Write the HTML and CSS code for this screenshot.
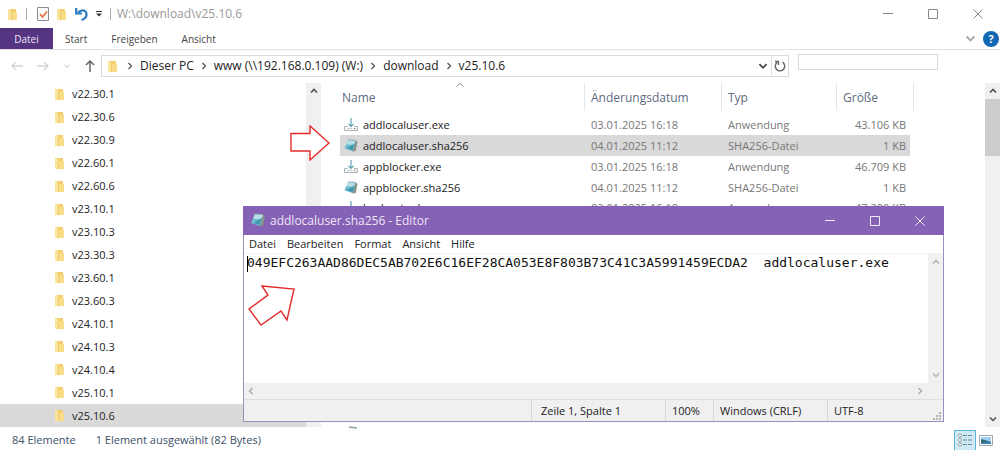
FILE: index.html
```
<!DOCTYPE html>
<html lang="de">
<head>
<meta charset="utf-8">
<title>W:\download\v25.10.6</title>
<link rel="stylesheet" href="styles.css">
</head>
<body>
<svg class="defs" aria-hidden="true">
  <symbol id="folder" viewBox="0 0 10 13"><path d="M1 1h7v10H1z" fill="#f3cf6f"/><path d="M0 1l4 1v10.500L0 12z" fill="#fbe49c"/><path d="M4 4h5v8H4z" fill="#f9dd86"/><path d="M3.500 2v10" stroke="#e9bd55" stroke-width=".7"/></symbol>
  <symbol id="note" viewBox="0 0 16 15"><path d="M12 1l3 2-2 10-4 0z" fill="#8b8f86"/><path d="M5 1l8 .500-3 11.500-9-3z" fill="#6dbccd"/><path d="M5 1l8 .500-2 5-8-1z" fill="#b4e0e6"/><path d="M8 7l3.500-2-1.800 7-6-2z" fill="#3f98af"/><path d="M5 1l8 .500" stroke="#8fa9ae"/></symbol>
  <symbol id="exe" viewBox="0 0 16 14"><path d="M1.500 8.500h3M11 8.500h3.500v4h-13v-4" fill="#f8f8f8" stroke="#adb3b8"/><path d="M4 10.500h5" stroke="#c9cdd0"/><path d="M11 10.500h1.500" stroke="#888"/><path d="M8 0v8.500M5.500 6L8 8.500 10.500 6" fill="none" stroke="#63a5b8" stroke-width="1.200"/></symbol>
  <symbol id="up" viewBox="0 0 10 10"><path d="M2 6.500l3-3 3 3" fill="none" stroke="currentColor" stroke-width="1.600"/></symbol>
  <symbol id="sort" viewBox="0 0 10 10"><path d="M1.500 6.500l3.500-3 3.500 3" fill="none" stroke="currentColor" stroke-width=".9"/></symbol>
  <symbol id="down" viewBox="0 0 10 10"><path d="M2 3.500l3 3 3-3" fill="none" stroke="currentColor" stroke-width="1.500"/></symbol>
  <symbol id="left" viewBox="0 0 10 10"><path d="M6.500 2l-3 3 3 3" fill="none" stroke="currentColor" stroke-width="1.500"/></symbol>
  <symbol id="right" viewBox="0 0 10 10"><path d="M3.500 2l3 3-3 3" fill="none" stroke="currentColor" stroke-width="1.300"/></symbol>
  <symbol id="min" viewBox="0 0 10 10"><path d="M0 4.500h10" stroke="currentColor"/></symbol>
  <symbol id="max" viewBox="0 0 10 10"><path d="M.5.5h9v9h-9z" fill="none" stroke="currentColor"/></symbol>
  <symbol id="close" viewBox="0 0 10 10"><path d="M.5.5l9 9M9.500.5l-9 9" stroke="currentColor"/></symbol>
</svg>
<div class="explorer">
  <header class="titlebar">
    <div class="quick">
      <svg class="folder"><use href="#folder"/></svg>
      <span class="bar"></span>
      <button class="plain" aria-label="Eigenschaften"><svg width="12" height="14" viewBox="0 0 12 14"><path d="M.5.5h11v13H.5z" fill="#fafafa" stroke="#8c8c8c"/><path d="M3 7l2.500 3L10 4.500" fill="none" stroke="#e2703a" stroke-width="1.700"/></svg></button>
      <button class="plain" aria-label="Neuer Ordner"><svg class="folder"><use href="#folder"/></svg></button>
      <button class="plain" aria-label="Rückgängig"><svg width="13" height="14" viewBox="0 0 13 14"><path d="M3 5.500C7 1.500 11.500 3.500 11.500 7.500c0 2.500-2 4.500-5 5.500" fill="none" stroke="#2b7cc0" stroke-width="2.200"/><path d="M1.200 1v5.500H7" fill="none" stroke="#2b7cc0" stroke-width="2.200"/></svg></button>
      <button class="plain" aria-label="Symbolleiste anpassen"><svg width="6" height="6" viewBox="0 0 6 6"><path d="M0 .5h6" stroke="#333"/><path d="M0 2.500h6L3 5.500z" fill="#333"/></svg></button>
      <span class="bar"></span>
      <h1>W:\download\v25.10.6</h1>
    </div>
    <div class="controls">
      <button class="plain" aria-label="Minimieren"><svg><use href="#min"/></svg></button>
      <button class="plain" aria-label="Maximieren"><svg><use href="#max"/></svg></button>
      <button class="plain" aria-label="Schließen"><svg><use href="#close"/></svg></button>
    </div>
  </header>
  <nav class="ribbon">
    <button class="plain tab file">Datei</button>
    <button class="plain tab">Start</button>
    <button class="plain tab">Freigeben</button>
    <button class="plain tab">Ansicht</button>
    <div class="help">
      <button class="plain" aria-label="Menüband erweitern"><svg width="13" height="13"><use href="#down"/></svg></button>
      <button class="plain question" aria-label="Hilfe">?</button>
    </div>
  </nav>
  <div class="navigation">
    <div class="arrows">
      <button class="plain" aria-label="Zurück"><svg width="12" height="12" viewBox="0 0 12 12"><path d="M12 6H1M5 2L1 6l4 4" fill="none" stroke="#d3d3d3" stroke-width="1.300"/></svg></button>
      <button class="plain" aria-label="Vorwärts"><svg width="12" height="12" viewBox="0 0 12 12"><path d="M0 6h11M7 2l4 4-4 4" fill="none" stroke="#d3d3d3" stroke-width="1.300"/></svg></button>
      <button class="plain pale" aria-label="Verlauf"><svg width="8" height="8"><use href="#down"/></svg></button>
      <button class="plain" aria-label="Nach oben"><svg width="10" height="12" viewBox="0 0 10 12"><path d="M5 12V1M1 5l4-4 4 4" fill="none" stroke="#666" stroke-width="1.500"/></svg></button>
    </div>
    <div class="address">
      <svg class="folder"><use href="#folder"/></svg>
      <svg class="sep"><use href="#right"/></svg>
      <a href="#pc">Dieser PC</a>
      <svg class="sep"><use href="#right"/></svg>
      <a href="#www">www (\\192.168.0.109) (W:)</a>
      <svg class="sep"><use href="#right"/></svg>
      <a href="#download">download</a>
      <svg class="sep"><use href="#right"/></svg>
      <a href="#version">v25.10.6</a>
      <button class="plain history" aria-label="Vorherige Orte"><svg width="12" height="12"><use href="#down"/></svg></button>
      <button class="plain refresh" aria-label="Aktualisieren"><svg width="12" height="12" viewBox="0 0 12 12"><path d="M8.500 2.200A4.700 4.700 0 1 1 3.500 2.200" fill="none" stroke="#666" stroke-width="1.400"/><path d="M1 1.500h3.500V5" fill="none" stroke="#666" stroke-width="1.300"/></svg></button>
    </div>
    <input class="search" type="search" aria-label="Suchen">
  </div>
  <main class="panes">
    <ul class="tree">
      <li><svg class="folder"><use href="#folder"/></svg>v22.30.1</li>
      <li><svg class="folder"><use href="#folder"/></svg>v22.30.6</li>
      <li><svg class="folder"><use href="#folder"/></svg>v22.30.9</li>
      <li><svg class="folder"><use href="#folder"/></svg>v22.60.1</li>
      <li><svg class="folder"><use href="#folder"/></svg>v22.60.6</li>
      <li><svg class="folder"><use href="#folder"/></svg>v23.10.1</li>
      <li><svg class="folder"><use href="#folder"/></svg>v23.10.3</li>
      <li><svg class="folder"><use href="#folder"/></svg>v23.30.3</li>
      <li><svg class="folder"><use href="#folder"/></svg>v23.60.1</li>
      <li><svg class="folder"><use href="#folder"/></svg>v23.60.3</li>
      <li><svg class="folder"><use href="#folder"/></svg>v24.10.1</li>
      <li><svg class="folder"><use href="#folder"/></svg>v24.10.3</li>
      <li><svg class="folder"><use href="#folder"/></svg>v24.10.4</li>
      <li><svg class="folder"><use href="#folder"/></svg>v25.10.1</li>
      <li class="selected"><svg class="folder"><use href="#folder"/></svg>v25.10.6</li>
    </ul>
    <div class="scroll">
      <svg><use href="#up"/></svg>
      <svg><use href="#down"/></svg>
    </div>
    <div class="files">
      <table>
        <colgroup><col class="name"><col class="date"><col class="type"><col class="size"></colgroup>
        <thead><tr><th>Name<svg class="sort"><use href="#sort"/></svg></th><th>Änderungsdatum</th><th>Typ</th><th>Größe</th></tr></thead>
        <tbody>
          <tr><td><div class="file-name"><svg><use href="#exe"/></svg>addlocaluser.exe</div></td><td>03.01.2025 16:18</td><td>Anwendung</td><td>43.106 KB</td></tr>
          <tr class="selected"><td><div class="file-name"><svg><use href="#note"/></svg>addlocaluser.sha256</div></td><td>04.01.2025 11:12</td><td>SHA256-Datei</td><td>1 KB</td></tr>
          <tr><td><div class="file-name"><svg><use href="#exe"/></svg>appblocker.exe</div></td><td>03.01.2025 16:18</td><td>Anwendung</td><td>46.709 KB</td></tr>
          <tr><td><div class="file-name"><svg><use href="#note"/></svg>appblocker.sha256</div></td><td>04.01.2025 11:12</td><td>SHA256-Datei</td><td>1 KB</td></tr>
          <tr class="partial"><td><div class="file-name"><svg><use href="#exe"/></svg>backuptool.exe</div></td><td>03.01.2025 16:18</td><td>Anwendung</td><td>47.200 KB</td></tr>
        </tbody>
      </table>
      <svg class="cut-icon" viewBox="0 0 10 3"><path d="M1 1l8 1" stroke="#8aa3a5" stroke-width="1.500"/></svg>
    </div>
    <div class="scroll">
      <svg><use href="#up"/></svg>
      <span class="thumb"></span>
      <svg><use href="#down"/></svg>
    </div>
  </main>
  <footer class="status">
    <span>84 Elemente</span>
    <span>1 Element ausgewählt (82 Bytes)</span>
    <div class="views">
      <button class="plain view active" aria-label="Details"><svg width="16" height="14" viewBox="0 0 16 14"><g fill="#fff" stroke="#888" stroke-width=".8"><circle cx="3" cy="2.500" r="1.600"/><circle cx="3" cy="7" r="1.600"/><circle cx="3" cy="11.500" r="1.600"/></g><path d="M6 2.500h4M11 2.500h4M6 7h4M11 7h4M6 11.500h4M11 11.500h4" stroke="#6f8792"/></svg></button>
      <button class="plain view" aria-label="Miniaturansichten"><svg width="14" height="11" viewBox="0 0 14 11"><path d="M.5.5h13v10H.5z" fill="#fff" stroke="#9aa"/><path d="M2 2h10v7H2z" fill="#9fd0f2"/><path d="M2 4l4 1 6 2v2H2z" fill="#316a70"/><path d="M2 7.500l10-.5v2H2z" fill="#3c83bd"/></svg></button>
    </div>
  </footer>
</div>

<section class="editor" aria-label="Editor">
  <header class="editor-title">
    <svg class="note"><use href="#note"/></svg>
    <h2>addlocaluser.sha256 - Editor</h2>
    <div class="controls">
      <button class="plain" aria-label="Minimieren"><svg><use href="#min"/></svg></button>
      <button class="plain" aria-label="Maximieren"><svg><use href="#max"/></svg></button>
      <button class="plain" aria-label="Schließen"><svg><use href="#close"/></svg></button>
    </div>
  </header>
  <nav class="menu">
    <button class="plain">Datei</button>
    <button class="plain">Bearbeiten</button>
    <button class="plain">Format</button>
    <button class="plain">Ansicht</button>
    <button class="plain">Hilfe</button>
  </nav>
  <div class="document">
    <textarea aria-label="Textinhalt" spellcheck="false" wrap="off">049EFC263AAD86DEC5AB702E6C16EF28CA053E8F803B73C41C3A5991459ECDA2  addlocaluser.exe</textarea>
    <span class="caret"></span>
    <div class="scroll light">
      <svg><use href="#up"/></svg>
      <svg><use href="#down"/></svg>
    </div>
  </div>
  <div class="hscroll">
    <svg><use href="#left"/></svg>
    <svg><use href="#right"/></svg>
  </div>
  <footer class="editor-status">
    <span class="position">Zeile 1, Spalte 1</span>
    <span class="zoom">100%</span>
    <span class="ending">Windows (CRLF)</span>
    <span class="encoding">UTF-8</span>
    <svg class="grip" viewBox="0 0 8 8"><path d="M6 0h2v2H6zM3 3h2v2H3zM6 3h2v2H6zM0 6h2v2H0zM3 6h2v2H3zM6 6h2v2H6z" fill="#b5b5b5"/></svg>
  </footer>
</section>

<svg class="pointer first" viewBox="0 0 40 36"><path d="M1 8.500h19V1l19 17-19 17v-9H1z" fill="#fff" stroke="#e32b2b" stroke-width="1.400"/></svg>
<svg class="pointer second" viewBox="0 0 50 44"><path d="M15 2l32 3-7 31-6-9-20 14L2 25l19-14z" fill="#fff" stroke="#e32b2b" stroke-width="1.400"/></svg>
</body>
</html>
```
FILE: styles.css
```
* { box-sizing: border-box; }
body {
  margin: 0;
  position: relative;
  background: #fff;
  color: #222;
  font: 12px/16px "Open Sans", "Noto Sans", sans-serif;
}
svg { display: block; flex: none; }
h1, h2 { margin: 0; font-weight: 400; }
a { color: inherit; text-decoration: none; }
.defs { position: absolute; width: 0; height: 0; }
.plain {
  display: flex;
  align-items: center;
  justify-content: center;
  padding: 0;
  border: 0;
  background: none;
  color: inherit;
  font: inherit;
}
.folder { width: 10px; height: 13px; }

.explorer { display: flex; flex-direction: column; min-height: 100vh; }
.titlebar { display: flex; justify-content: space-between; height: 28px; }
.quick { display: flex; align-items: center; gap: 8px; padding-left: 8px; }
.quick h1 { margin-left: -2px; font-size: 12px; color: #999; }
.bar { width: 1px; height: 12px; background: #aaa; }
.folder + .bar { margin-right: 2px; }
.controls { display: flex; color: #888; }
.controls button { width: 45px; }
.controls svg { width: 10px; height: 10px; }

.ribbon {
  display: flex;
  height: 22px;
  border-bottom: 1px solid #e1e1e1;
  font-size: 10px;
  color: #444;
}
.tab { padding: 0 12px; }
.tab.file { width: 53px; height: 21px; padding: 0; background: #553482; color: #eee5f5; }
.help { display: flex; align-items: center; gap: 6px; margin-left: auto; padding-right: 1px; color: #aaa; }
.question { width: 16px; height: 16px; border-radius: 50%; background: #1268b3; color: #fff; font-size: 11px; font-weight: 700; }

.navigation { display: flex; height: 33px; padding: 5px 62px 6px 11px; }
.arrows { display: flex; align-items: center; width: 90px; gap: 14px; }
.pale { color: #d3d3d3; }
.address {
  display: flex;
  flex: 1;
  align-items: center;
  gap: 5px;
  padding-left: 6px;
  border: 1px solid #d9d9d9;
}
.address .folder { margin-right: 2px; }
.sep { width: 10px; height: 10px; color: #555; }
.history { margin-left: auto; color: #444; }
.refresh { align-self: stretch; width: 17px; margin-left: -3px; border-left: 1px solid #e1e1e1; }
.search {
  width: 140px;
  height: 16px;
  margin: -1px 0 0 9px;
  padding: 0 4px;
  border: 1px solid #d9d9d9;
  background: #fff;
  font: inherit;
  appearance: none;
}

.panes { display: flex; flex: 1; }
.tree {
  display: flex;
  flex-direction: column;
  width: 306px;
  margin: 0;
  padding: 0;
  list-style: none;
  font-size: 11px;
}
.tree li { display: flex; flex: 1; align-items: center; gap: 7px; padding-left: 55px; }
.tree .selected { background: #d9d9d9; }
.scroll {
  display: flex;
  flex-direction: column;
  align-items: center;
  width: 15px;
  padding: 3px 0;
  background: #f0f0f0;
  color: #505050;
}
.scroll svg { width: 10px; height: 10px; }
.scroll svg:last-child { margin-top: auto; }
.thumb { align-self: stretch; height: 57px; margin-top: 3px; background: #cdcdcd; }

.files { position: relative; flex: 1; padding: 0 71px 0 19px; }
table { width: 100%; table-layout: fixed; border-spacing: 0; color: #777; font-size: 11px; }
.date { width: 137px; }
.type { width: 115px; }
.size { width: 77px; }
th {
  position: relative;
  height: 31px;
  padding: 5px 6px 0;
  border-right: 1px solid #e5e5e5;
  border-bottom: 7px solid #fff;
  color: #5d6b80;
  font-size: 12px;
  font-weight: 400;
  text-align: left;
}
th:first-child { padding-left: 2px; }
.sort { position: absolute; top: -3px; left: 47%; width: 10px; height: 10px; color: #888; }
td { height: 21px; padding: 0 0 0 6px; white-space: nowrap; }
td:first-child { padding-left: 3px; color: #222; }
td:last-child { padding-right: 4px; border-right: 4px solid transparent; background-clip: padding-box; text-align: right; }
.files .selected td { background-color: #d9d9d9; }
.partial td { height: 19px; }
.file-name { display: flex; align-items: center; gap: 4px; }
.file-name svg { width: 16px; height: 14px; }
.cut-icon { position: absolute; bottom: -2px; left: 27px; width: 10px; height: 3px; }

.status { display: flex; align-items: center; gap: 20px; height: 23px; padding: 3px 7px 0 12px; color: #3b5168; font-size: 11px; }
.views { display: flex; align-items: center; align-self: stretch; gap: 3px; margin-left: auto; }
.view.active { width: 22px; height: 21px; border: 1px solid #5db7d8; background: #cdeaf6; }

.editor {
  position: absolute;
  top: 206px;
  left: 243px;
  display: flex;
  flex-direction: column;
  width: 701px;
  height: 216px;
  border: 1px solid #9d8fbd;
  background: #fff;
  font-size: 11px;
}
.editor-title {
  display: flex;
  align-items: center;
  height: 29px;
  margin: -1px -1px 0;
  gap: 4px;
  padding: 0 2px 0 7px;
  background: #8562b5;
  color: #eee5f7;
}
.editor-title h2 { font-size: 12px; }
.note { width: 16px; height: 15px; }
.editor-title .controls { align-self: stretch; margin-left: auto; color: #f2ebf8; }
.menu { display: flex; height: 18px; gap: 11px; padding-left: 5px; }
.document { position: relative; display: flex; flex: 1; border-top: 1px solid #f3f3f3; }
textarea {
  flex: 1;
  min-width: 0;
  padding: 0 3px;
  border: 0;
  outline: 0;
  resize: none;
  overflow: hidden;
  background: #fff;
  color: #111;
  font: 13px/18px "DejaVu Sans Mono", monospace;
}
.caret { position: absolute; top: 2px; left: 3px; width: 1px; height: 16px; background: #000; }
.light { color: #b5b5b5; }
.hscroll { display: flex; align-items: center; justify-content: space-between; height: 16px; padding: 0 18px 0 2px; background: #f0f0f0; color: #aaa; }
.hscroll svg { width: 10px; height: 10px; }
.editor-status { position: relative; display: flex; height: 22px; border-top: 1px solid #dedede; background: #f0f0f0; }
.editor-status span { padding: 3px 0 0 6px; border-left: 1px solid #d9d9d9; }
.editor-status .position { width: 134px; margin-left: auto; padding-left: 9px; }
.zoom { width: 48px; }
.ending { width: 114px; }
.encoding { width: 116px; }
.grip { position: absolute; right: 2px; bottom: 1px; width: 8px; height: 8px; }

.pointer { position: absolute; pointer-events: none; }
.first { top: 125px; left: 290px; width: 40px; height: 36px; }
.second { top: 284px; left: 247px; width: 50px; height: 44px; }
```
